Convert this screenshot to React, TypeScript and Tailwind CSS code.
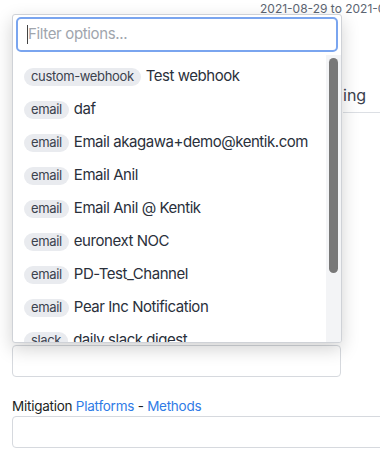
import React from "react";

const rows: [string, string][] = [
  ["custom-webhook", "Test webhook"],
  ["email", "daf"],
  ["email", "Email akagawa+demo@kentik.com"],
  ["email", "Email Anil"],
  ["email", "Email Anil @ Kentik"],
  ["email", "euronext NOC"],
  ["email", "PD-Test_Channel"],
  ["email", "Pear Inc Notification"],
  ["slack", "daily slack digest"],
];

export default function App() {
  return (
    <div
      className="relative w-[380px] h-[473px] overflow-hidden bg-white"
      style={{ fontFamily: "Inter, 'Noto Sans', sans-serif" }}
    >
      {/* background page */}
      <div className="pl-[260px] h-[17px] whitespace-nowrap text-[12px] leading-[17px] text-[#5c6572]">
        2021-08-29 to 2021-09-05
      </div>
      <div className="flex justify-end mt-[66px]">
        <div className="w-[37px] h-[30px] border-b border-[#dcdfe4] text-[16px] leading-[24px] text-[#3a414d] whitespace-nowrap overflow-hidden">
          ing
        </div>
      </div>
      <div className="mt-[232px] ml-[12px] w-[329px] h-[32px] border border-[#d6d9de] rounded-[4px]" />
      <div className="mt-[21px] ml-[12px] text-[13.5px] leading-[17px] tracking-[-0.25px] text-[#1c1f24] whitespace-nowrap">
        Mitigation <span className="text-[#2f7be6]">Platforms</span> -{" "}
        <span className="text-[#2f7be6]">Methods</span>
      </div>
      <div className="mt-[1px] ml-[12px] w-[380px] h-[32px] border border-[#d6d9de] rounded-[4px]" />

      {/* popover */}
      <div className="absolute left-[12px] top-[14px] w-[330px] h-[329px] bg-white border border-[#cfd2d7] rounded-[3px] shadow-[0_6px_18px_rgba(0,0,0,0.18)] flex flex-col overflow-hidden">
        <div className="pt-[2px] px-[3px] pb-[3px]">
          <div className="h-[35px] border-2 border-[#7aa5ef] rounded-[5px] flex items-center pl-[9px]">
            <div className="w-[1px] h-[19px] bg-[#444]" />
            <span className="text-[15px] tracking-[-0.35px] text-[#a0a5ad]">Filter options...</span>
          </div>
        </div>
        <div className="flex flex-1 min-h-0">
          <div className="flex-1 overflow-hidden pt-[5px]">
            {rows.map(([tag, name], i) => (
              <div key={i} className="h-[33px] flex items-center pl-[11px] whitespace-nowrap">
                <span className="h-[18px] flex items-center px-[7px] rounded-full bg-[#e9ebef] text-[13px] tracking-[-0.35px] text-[#3b424d]">
                  {tag}
                </span>
                <span className="ml-[5px] text-[15px] tracking-[-0.45px] text-[#2a303b]">{name}</span>
              </div>
            ))}
          </div>
          <div className="w-[15px] bg-[#f3f4f6] pt-[3px] pl-[3px]">
            <div className="w-[9px] h-[215px] rounded-full bg-[#787878]" />
          </div>
        </div>
      </div>
    </div>
  );
}
